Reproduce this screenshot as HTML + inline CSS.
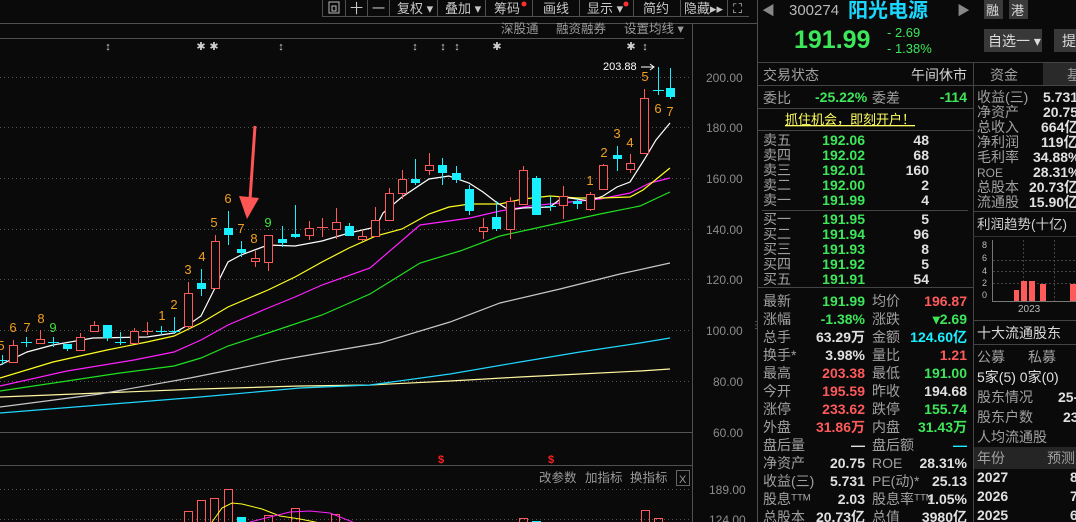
<!DOCTYPE html>
<html><head><meta charset="utf-8"><style>
html,body{margin:0;padding:0;background:#0a0a0a;width:1076px;height:522px;overflow:hidden}
svg{display:block}
text{font-family:"Liberation Sans","Noto Sans CJK SC",sans-serif}
.ax{fill:#8c8c8c;font-size:12px}
.g{fill:#a0a0a0;font-size:14px}
.n{font-size:14px;font-weight:bold}
.gr{fill:#3ee65a}.rd{fill:#ff5a5a}.wh{fill:#e0e0e0}.cy{fill:#19f0ff}
.td{fill:#f0a020;font-size:13px}
.tb{fill:#c8c8c8;font-size:13px}
</style></head><body>
<svg width="1076" height="522" viewBox="0 0 1076 522" xmlns="http://www.w3.org/2000/svg">
<rect width="1076" height="522" fill="#0a0a0a"/>
<!-- toolbar -->
<g stroke="#505050" fill="none">
<path d="M322.5 0V16.5H749"/>
<path d="M345.5 0V16M367.5 0V16M389.5 0V16M437.5 0V16M485.5 0V16M532.5 0V16M579.5 0V16M633.5 0V16M680.5 0V16M727.5 0V16"/>
<path d="M0 23.5H757"/>
<path d="M0 38.5H684"/>
<path d="M692.5 23V522"/>
<path d="M757.5 0V522"/>
<path d="M0 465.5H692"/>
</g>
<rect x="329" y="2" width="10" height="11" fill="none" stroke="#bbb"/><rect x="332" y="6" width="4" height="5" fill="none" stroke="#bbb"/>
<text x="350" y="13" class="tb">十</text><text x="372" y="13" class="tb">一</text>
<text x="397" y="13" class="tb">复权 ▾</text><text x="445" y="13" class="tb">叠加 ▾</text>
<text x="494" y="13" class="tb">筹码</text><circle cx="524" cy="4" r="2.5" fill="#ff3030"/>
<text x="543" y="13" class="tb">画线</text>
<text x="587" y="13" class="tb">显示 ▾</text><circle cx="626" cy="4" r="2.5" fill="#ff3030"/>
<text x="643" y="13" class="tb">简约</text>
<text x="684" y="13" class="tb">隐藏▸▸</text>
<text x="733" y="13" class="tb" font-size="11">⛶</text>
<text x="501" y="33" fill="#9a9a9a" font-size="12.5">深股通</text>
<text x="556" y="33" fill="#9a9a9a" font-size="12.5">融资融券</text>
<text x="624" y="33" fill="#9a9a9a" font-size="12.5">设置均线 ▾</text>
<!-- marker row -->
<g fill="#d0d0d0" font-size="11" text-anchor="middle">
<text x="108" y="50">↕</text><text x="201" y="50">✱</text><text x="214" y="50">✱</text><text x="281" y="50">↕</text><text x="415" y="50">↕</text><text x="443" y="50">↕</text><text x="457" y="50">↕</text><text x="497" y="50">✱</text><text x="631" y="50">✱</text><text x="645" y="50">↕</text>
</g>
<!-- grid -->
<g stroke="#555" stroke-dasharray="1 3">
<path d="M0 77.5H692M0 127.5H692M0 178.5H692M0 229.5H692M0 279.5H692M0 330.5H692M0 381.5H692M0 489.5H692M0 519.5H692"/>
</g>
<path d="M0 432.5H692" stroke="#555"/>
<g class="ax">
<text x="706" y="82">200.00</text><text x="706" y="132">180.00</text><text x="706" y="183">160.00</text><text x="706" y="234">140.00</text><text x="706" y="284">120.00</text><text x="706" y="335">100.00</text><text x="713" y="386">80.00</text><text x="713" y="437">60.00</text><text x="709" y="494">189.00</text><text x="709" y="524">124.00</text>
</g>
<!-- MA lines -->
<g fill="none" stroke-width="1.2">
<polyline stroke="#fff8a0" points="0,397 100,393 200,389 300,386 370,385 450,381 520,377 580,374 640,371 670,369"/>
<polyline stroke="#20d8ff" points="0,413 100,405 200,397 300,388 370,385 450,374 520,362 580,352 640,343 670,338"/>
<polyline stroke="#c8c8c8" points="0,407 100,394 190,378 280,360 380,343 450,322 500,303 560,289 620,274 670,263"/>
<polyline stroke="#20e020" points="0,391 67,381 120,373 174,366 201,358 228,346 268,333 322,315 370,294 420,263 460,251 500,236 550,225 600,214 640,206 670,192"/>
<polyline stroke="#ff20ff" points="0,386 67,371 134,360 174,352 201,340 228,325 268,308 295,297 322,285 370,268 420,225 470,218 500,211 530,206 560,203 600,199 630,193 650,183 670,178"/>
<polyline stroke="#ffff20" points="0,378 53,362 107,350 147,342 174,336 201,323 228,307 268,290 295,277 322,262 349,248 376,236 402,229 429,214 449,207 470,204 500,204 523,199 550,196 577,198 600,198 630,197 643,190 670,168"/>
<polyline stroke="#ffffff" points="0,365 27,352 53,345 93,338 147,337 174,333 188,325 201,316 228,262 241,255 268,245 295,246 322,241 349,233 376,227 383,213 402,197 429,179 449,176 469,183 483,192 496,202 509,210 523,208 550,207 563,197 590,201 603,196 617,187 630,182 644,160 656,140 670,123"/>
</g>
<!-- cyan candles -->
<g stroke="#19f0ff" fill="#19f0ff">
<path d="M2.5 355V365M-2 360.5H7M26.5 337V347M21 342.5H32M53.5 337V347M48 342.5H59M67.5 344V351M107.5 325V341M120.5 332V345M115 342.5H126M161.5 326V335M156 331.5H167M174.5 317V334M169 331.5H180M201.5 269V296M228.5 211V245M241.5 241V257M282.5 226V247M295.5 205V238M349.5 223V236M415.5 159V185M442.5 158V185M456.5 166V183M469.5 185V215M496.5 201V231M536.5 176V215M550.5 196V211M545 206.5H556M577.5 199V209M617.5 146V171M658.5 67V95M653 90.5H664M670.5 68V99"/>
</g>
<g fill="#19f0ff">
<rect x="63" y="344" width="9" height="5"/><rect x="103" y="325" width="9" height="13"/><rect x="197" y="283" width="9" height="6"/><rect x="224" y="228" width="9" height="7"/><rect x="237" y="249" width="9" height="4"/><rect x="278" y="239" width="9" height="4"/><rect x="291" y="234" width="9" height="3"/><rect x="345" y="226" width="9" height="10"/><rect x="411" y="179" width="9" height="4"/><rect x="438" y="165" width="9" height="8"/><rect x="452" y="173" width="9" height="7"/><rect x="465" y="189" width="9" height="22"/><rect x="492" y="217" width="9" height="12"/><rect x="532" y="178" width="9" height="37"/><rect x="573" y="201" width="9" height="3"/><rect x="613" y="155" width="9" height="4"/><rect x="666" y="88" width="9" height="9"/>
</g>
<!-- red candles -->
<g stroke="#ff5a5a" fill="#0a0a0a">
<path d="M13.5 340V363M40.5 330V343M80.5 333V351M94.5 321V331M134.5 328V344M147.5 322V335M142 331.5H153M188.5 282V329M215.5 235V289M255.5 251V267M268.5 235V271M309.5 221V240M322.5 218V237M317 227.5H328M336.5 208V239M362.5 230V241M375.5 207V237M389.5 188V220M402.5 170V199M429.5 153V175M483.5 218V239M510.5 197V239M523.5 166V205M563.5 186V219M590.5 192V211M603.5 164V189M630.5 154V173M644.5 89V153"/>
<rect x="9.5" y="345.5" width="8" height="17"/><rect x="36.5" y="339.5" width="8" height="4"/><rect x="76.5" y="337.5" width="8" height="13"/><rect x="90.5" y="325.5" width="8" height="6"/><rect x="130.5" y="331.5" width="8" height="12"/><rect x="184.5" y="293.5" width="8" height="33"/><rect x="211.5" y="241.5" width="8" height="47"/><rect x="251.5" y="258.5" width="8" height="3"/><rect x="264.5" y="235.5" width="8" height="27"/><rect x="305.5" y="228.5" width="8" height="7"/><rect x="332.5" y="222.5" width="8" height="7"/><rect x="358.5" y="236.5" width="8" height="3"/><rect x="371.5" y="220.5" width="8" height="16"/><rect x="385.5" y="193.5" width="8" height="27"/><rect x="398.5" y="179.5" width="8" height="14"/><rect x="425.5" y="165.5" width="8" height="5"/><rect x="479.5" y="227.5" width="8" height="4"/><rect x="506.5" y="201.5" width="8" height="28"/><rect x="519.5" y="170.5" width="8" height="34"/><rect x="559.5" y="196.5" width="8" height="9"/><rect x="586.5" y="194.5" width="8" height="15"/><rect x="599.5" y="165.5" width="8" height="24"/><rect x="626.5" y="163.5" width="8" height="6"/><rect x="640.5" y="98.5" width="8" height="55"/>
</g>
<!-- TD numbers -->
<g class="td" text-anchor="middle">
<text x="1" y="350">5</text><text x="13" y="332">6</text><text x="27" y="332">7</text><text x="41" y="323">8</text><text x="53" y="332" fill="#40e040">9</text>
<text x="162" y="320">1</text><text x="174" y="309">2</text><text x="188" y="274">3</text><text x="202" y="261">4</text><text x="214" y="227">5</text><text x="228" y="203">6</text><text x="241" y="233">7</text><text x="254" y="243">8</text><text x="268" y="227" fill="#40e040">9</text>
<text x="590" y="185">1</text><text x="604" y="157">2</text><text x="617" y="138">3</text><text x="630" y="147">4</text><text x="645" y="81">5</text><text x="658" y="113">6</text><text x="670" y="116">7</text>
</g>
<text x="603" y="70" fill="#fff" font-size="11">203.88</text>
<path d="M641 67H654M650 64L654 67L650 70" stroke="#fff" fill="none"/>
<!-- red arrow -->
<path d="M255 126L250 200" stroke="#ff5555" stroke-width="3"/>
<path d="M239 196L259 198L247 219Z" fill="#ff5555"/>
<!-- $ marks -->
<text x="441" y="463" fill="#ff2020" font-size="11" font-weight="bold" text-anchor="middle">$</text>
<text x="551" y="463" fill="#ff2020" font-size="11" font-weight="bold" text-anchor="middle">$</text>
<text x="539" y="482" fill="#9a9a9a" font-size="12.5">改参数</text><text x="585" y="482" fill="#9a9a9a" font-size="12.5">加指标</text><text x="630" y="482" fill="#9a9a9a" font-size="12.5">换指标</text>
<rect x="676.5" y="470.5" width="13" height="15" fill="none" stroke="#666"/><text x="679" y="483" fill="#999" font-size="11">X</text>
<!-- volume -->
<g stroke="#ff5a5a" fill="none">
<rect x="184.5" y="511.5" width="8" height="12"/><rect x="197.5" y="500.5" width="8" height="23"/><rect x="210.5" y="498.5" width="8" height="25"/><rect x="224.5" y="489.5" width="8" height="34"/><rect x="264.5" y="515.5" width="8" height="8"/><rect x="291.5" y="508.5" width="8" height="15"/><rect x="331.5" y="514.5" width="8" height="9"/><rect x="519.5" y="518.5" width="8" height="5"/><rect x="641.5" y="510.5" width="8" height="13"/><rect x="654.5" y="518.5" width="8" height="5"/>
</g>
<rect x="237" y="517" width="9" height="6" fill="#19f0ff"/><rect x="532" y="521" width="9" height="2" fill="#19f0ff"/>
<polyline fill="none" stroke="#ffff20" points="212,522 222,508 232,503 242,504 262,509 280,516 300,519 320,523"/>
<polyline fill="none" stroke="#ff20ff" points="250,522 270,517 290,512 310,511 330,513 355,523"/>
<text x="751" y="328" fill="#888" font-size="10">⋮</text>

<!-- RIGHT PANEL -->
<text x="762" y="15" fill="#888" font-size="13">◀</text>
<text x="789" y="15" fill="#b8b8b8" font-size="15">300274</text>
<text x="848" y="17" fill="#19d8ff" font-size="20" font-weight="bold">阳光电源</text>
<text x="957" y="15" fill="#888" font-size="13">▶</text>
<rect x="984" y="0" width="19" height="19" fill="#3a3a3a"/><text x="986" y="15" fill="#ddd" font-size="13">融</text>
<rect x="1009" y="0" width="19" height="19" fill="#3a3a3a"/><text x="1011" y="15" fill="#ddd" font-size="13">港</text>
<text x="794" y="48" class="gr" font-size="25" font-weight="bold">191.99</text>
<text x="887" y="37" class="gr" font-size="13">- 2.69</text>
<text x="887" y="53" class="gr" font-size="13">- 1.38%</text>
<rect x="984" y="29" width="58" height="23" fill="#383838"/><text x="988" y="46" fill="#ddd" font-size="14">自选一 ▾</text>
<rect x="1054" y="29" width="30" height="23" fill="#383838"/><text x="1062" y="46" fill="#ddd" font-size="14">提</text>
<g stroke="#444" fill="none">
<path d="M758 62.5H1076M758 85.5H973M973.5 62V522M758 108.5H973M758 130.5H973M762 210.5H968M758 287.5H973M973 85.5H1076M973 211.5H1076M973 320.5H1076M973 344.5H1076"/>
</g>
<text x="763" y="80" class="g">交易状态</text><text x="967" y="80" fill="#d0d0d0" font-size="14" text-anchor="end">午间休市</text>
<rect x="1043" y="63" width="33" height="22" fill="#2a2a2a"/>
<text x="990" y="80" class="g">资金</text><text x="1067" y="80" class="g">基</text>
<text x="763" y="103" class="g">委比</text><text x="815" y="102" class="gr n">-25.22%</text><text x="872" y="103" class="g">委差</text><text x="967" y="102" class="gr n" text-anchor="end">-114</text>
<text x="850" y="124" fill="#ffff60" font-size="13" text-anchor="middle" text-decoration="underline">抓住机会，即刻开户！</text>
<g class="g"><text x="763" y="145">卖五</text><text x="763" y="160">卖四</text><text x="763" y="175">卖三</text><text x="763" y="190">卖二</text><text x="763" y="205">卖一</text>
<text x="763" y="224">买一</text><text x="763" y="239">买二</text><text x="763" y="254">买三</text><text x="763" y="269">买四</text><text x="763" y="284">买五</text></g>
<g class="gr n" text-anchor="end"><text x="865" y="145">192.06</text><text x="865" y="160">192.02</text><text x="865" y="175">192.01</text><text x="865" y="190">192.00</text><text x="865" y="205">191.99</text>
<text x="865" y="224">191.95</text><text x="865" y="239">191.94</text><text x="865" y="254">191.93</text><text x="865" y="269">191.92</text><text x="865" y="284">191.91</text></g>
<g class="wh n" text-anchor="end"><text x="929" y="145">48</text><text x="929" y="160">68</text><text x="929" y="175">160</text><text x="929" y="190">2</text><text x="929" y="205">4</text>
<text x="929" y="224">5</text><text x="929" y="239">96</text><text x="929" y="254">8</text><text x="929" y="269">5</text><text x="929" y="284">54</text></g>
<!-- stats -->
<g class="g" font-size="15">
<text x="763" y="306">最新</text><text x="763" y="324">涨幅</text><text x="763" y="342">总手</text><text x="763" y="360">换手*</text><text x="763" y="378">最高</text><text x="763" y="396">今开</text><text x="763" y="414">涨停</text><text x="763" y="432">外盘</text><text x="763" y="450">盘后量</text><text x="763" y="468">净资产</text><text x="763" y="486">收益(三)</text><text x="763" y="504">股息ᵀᵀᴹ</text><text x="763" y="522">总股本</text>
<text x="872" y="306">均价</text><text x="872" y="324">涨跌</text><text x="872" y="342">金额</text><text x="872" y="360">量比</text><text x="872" y="378">最低</text><text x="872" y="396">昨收</text><text x="872" y="414">跌停</text><text x="872" y="432">内盘</text><text x="872" y="450">盘后额</text><text x="872" y="468">ROE</text><text x="872" y="486">PE(动)*</text><text x="872" y="504">股息率ᵀᵀᴹ</text><text x="872" y="522">总值</text>
</g>
<g class="n" text-anchor="end">
<text x="865" y="306" class="gr">191.99</text><text x="865" y="324" class="gr">-1.38%</text><text x="865" y="342" class="wh">63.29万</text><text x="865" y="360" class="wh">3.98%</text><text x="865" y="378" class="rd">203.38</text><text x="865" y="396" class="rd">195.59</text><text x="865" y="414" class="rd">233.62</text><text x="865" y="432" class="rd">31.86万</text><text x="865" y="450" class="wh">—</text><text x="865" y="468" class="wh">20.75</text><text x="865" y="486" class="wh">5.731</text><text x="865" y="504" class="wh">2.03</text><text x="865" y="522" class="wh">20.73亿</text>
<text x="967" y="306" class="rd">196.87</text><text x="967" y="324" class="gr">▾2.69</text><text x="967" y="342" class="cy">124.60亿</text><text x="967" y="360" class="rd">1.21</text><text x="967" y="378" class="gr">191.00</text><text x="967" y="396" class="wh">194.68</text><text x="967" y="414" class="gr">155.74</text><text x="967" y="432" class="gr">31.43万</text><text x="967" y="450" class="cy">—</text><text x="967" y="468" class="wh">28.31%</text><text x="967" y="486" class="wh">25.13</text><text x="967" y="504" class="wh">1.05%</text><text x="967" y="522" class="wh">3980亿</text>
</g>
<!-- right column -->
<g class="g" font-size="13.5">
<text x="977" y="102">收益(三)</text><text x="977" y="117">净资产</text><text x="977" y="132">总收入</text><text x="977" y="147">净利润</text><text x="977" y="162">毛利率</text><text x="977" y="177" font-size="12">ROE</text><text x="977" y="192">总股本</text><text x="977" y="207">流通股</text>
</g>
<g class="wh n" font-size="13.5">
<text x="1043" y="102">5.731</text><text x="1043" y="117">20.75</text><text x="1041" y="132">664亿</text><text x="1041" y="147">119亿</text><text x="1033" y="162">34.88%</text><text x="1033" y="177">28.31%</text><text x="1029" y="192">20.73亿</text><text x="1029" y="207">15.90亿</text>
</g>
<text x="977" y="229" fill="#d0d0d0" font-size="13.5">利润趋势(十亿)</text>
<path d="M973 236.5H1076" stroke="#333"/>
<g fill="#bbb" font-size="9"><text x="982" y="248">8</text><text x="982" y="261">6</text><text x="982" y="274">4</text><text x="982" y="286">2</text><text x="982" y="298">0</text><text x="1018" y="312" font-size="10">2023</text></g>
<path d="M992.5 240V301.5H1076" stroke="#777" fill="none"/>
<path d="M1023.5 240V301M1054.5 240V301M993 271.5H1076M993 283.5H1076M993 260.5H1076" stroke="#444" stroke-dasharray="2 2"/>
<g fill="#ff5a5a"><rect x="1014" y="290" width="5" height="11"/><rect x="1021" y="281" width="6" height="20"/><rect x="1029" y="281" width="6" height="20"/><rect x="1040" y="284" width="6" height="17"/><rect x="1070" y="284" width="6" height="17"/></g>
<text x="977" y="338" fill="#d8d8d8" font-size="14">十大流通股东</text>
<text x="977" y="362" class="g">公募</text><text x="1028" y="362" class="g">私募</text>
<text x="977" y="382" class="wh" font-size="14">5家(5)  0家(0)</text>
<text x="977" y="402" class="g">股东情况</text><text x="1058" y="402" class="wh n">25-</text>
<text x="977" y="422" class="g">股东户数</text><text x="1063" y="422" class="wh n">23</text>
<text x="977" y="442" class="g">人均流通股</text>
<rect x="974" y="447" width="102" height="22" fill="#252525"/>
<text x="977" y="463" class="g">年份</text><text x="1047" y="463" class="g">预测</text>
<g class="wh n"><text x="977" y="482">2027</text><text x="977" y="501">2026</text><text x="977" y="520">2025</text><text x="1070" y="482">8</text><text x="1070" y="501">7</text><text x="1070" y="520">6</text></g>
</svg>
</body></html>
